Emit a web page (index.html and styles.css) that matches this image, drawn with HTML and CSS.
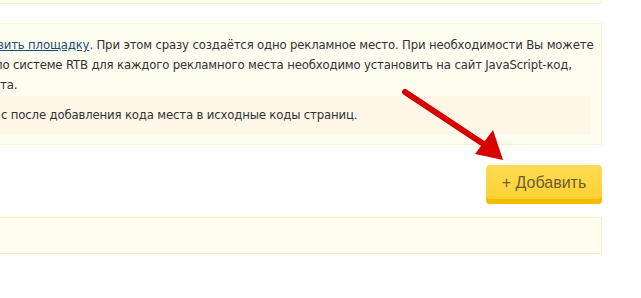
FILE: index.html
```html
<!DOCTYPE html>
<html lang="ru">
<head>
  <meta charset="UTF-8">
  <meta name="viewport" content="width=device-width, initial-scale=1.0">
  <title>Площадки</title>
  <link rel="stylesheet" href="styles.css">
</head>
<body>
  <div class="page">
    <div class="box box-top"></div>

    <div class="box info">
      <p class="text">
        <span class="line l1"><a href="#">вить площадку</a>. При этом сразу создаётся одно рекламное место. При необходимости Вы можете</span>
        <span class="line l2">по системе RTB для каждого рекламного места необходимо установить на сайт JavaScript-код,</span>
        <span class="line l3">та.</span>
      </p>
      <div class="note">
        <span class="line l4">с после добавления кода места в исходные коды страниц.</span>
      </div>
    </div>

    <div class="actions">
      <button type="button" class="btn-add">+ Добавить</button>
    </div>

    <div class="box empty"></div>
  </div>

  <svg class="pointer" width="110" height="80" viewBox="0 0 110 80">
    <line x1="8" y1="12" x2="88" y2="65" stroke="#d80000" stroke-width="6" stroke-linecap="round"/>
    <polygon points="106,80 78,74 96,50" fill="#d80000"/>
  </svg>
</body>
</html>
```

FILE: styles.css
```css
:root {
  --box-bg: #fffcf0;
  --box-border: #fcf1cf;
  --note-bg: #fef7e8;
  --text-color: #333;
  --link-color: #1d4e78;
}

body {
  margin: 0;
  padding: 0;
  overflow: hidden;
  font-family: "DejaVu Sans Condensed", "DejaVu Sans", Tahoma, sans-serif;
  font-size: 13px;
  letter-spacing: -0.16px;
  color: var(--text-color);
  background-color: #fff;
  position: relative;
  height: 298px;
}

.page {
  width: 622px;
  margin-left: -20px;
}

.box {
  background-color: var(--box-bg);
  border: 1px solid var(--box-border);
}

.box-top {
  height: 20px;
  margin-top: -18px;
}

.info {
  margin-top: 19px;
  padding: 11px 10px 10px;
}

.text {
  margin: 0 0 1px;
}

.line {
  display: block;
  white-space: nowrap;
  line-height: 20px;
}

.l1 { text-indent: 6px; }
.l2 { text-indent: 4px; }
.l3 { text-indent: 9px; }
.l4 { text-indent: 0; }

.text a {
  color: var(--link-color);
  text-decoration: underline;
}

.note {
  background-color: var(--note-bg);
  padding: 9px 10px;
}

.actions {
  display: flex;
  justify-content: flex-end;
  margin-top: 20px;
}

.btn-add {
  width: 116px;
  height: 39px;
  padding: 0 0 4px;
  border: none;
  border-radius: 4px;
  background: linear-gradient(#ffdc55, #ffd02c);
  box-shadow: inset 0 -5px 0 #f4bb00;
  font-family: "Liberation Sans", Arial, sans-serif;
  font-size: 16px;
  letter-spacing: 0;
  color: #6b5d33;
  cursor: pointer;
}

.empty {
  margin-top: 13px;
  height: 35px;
  border-color: #fdefc3;
}

.pointer {
  position: absolute;
  left: 397px;
  top: 80px;
}
```
